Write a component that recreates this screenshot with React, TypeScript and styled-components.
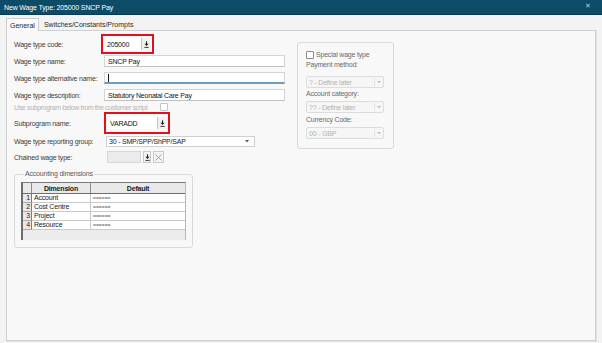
import styled, { createGlobalStyle } from 'styled-components';

const GlobalStyle = createGlobalStyle`
    html, body {
        margin: 0;
        padding: 0;
        background: #f3f3f3;
    }
    body {
        font-family: 'Liberation Sans', Arial, sans-serif;
    }
`;

const dims = [
    { no: 1, name: 'Account' },
    { no: 2, name: 'Cost Centre' },
    { no: 3, name: 'Project' },
    { no: 4, name: 'Resource' },
];

const DownloadIcon = () => (
    <svg width="5" height="7" viewBox="0 0 5 7">
        <path d="M2.5 0.3V3.2" stroke="#222" strokeWidth="1.1" />
        <path d="M0.4 2.8H4.6L2.5 5Z" fill="#222" />
        <path d="M0.4 6.4H4.6" stroke="#222" strokeWidth="0.9" />
    </svg>
);

const CrossIcon = () => (
    <svg width="7" height="7" viewBox="0 0 7 7">
        <path d="M0.5 0.5L6.5 6.5M6.5 0.5L0.5 6.5" stroke="#8a8a8a" strokeWidth="0.8" />
    </svg>
);

const Caret = ({ color }: { color: string }) => (
    <svg width="4" height="3" viewBox="0 0 4 3">
        <path d="M0 0H4L2 2.5Z" fill={color} />
    </svg>
);

export default function App() {
    return (
        <>
            <GlobalStyle />
            <Window>
                <TitleBar>
                    <span>New Wage Type: 205000 SNCP Pay</span>
                    <CloseGlyph>✕</CloseGlyph>
                </TitleBar>

                <TabStrip>
                    <Tab $active>General</Tab>
                    <Tab>Switches/Constants/Prompts</Tab>
                </TabStrip>

                <Panel>
                    <LeftColumn>
                        <Row $h={20}>
                            <Label>Wage type code:</Label>
                            <RedFrame $width={53} $shift={-3}>
                                <InputWithButton>
                                    <InputText>205000</InputText>
                                    <IconButton><DownloadIcon /></IconButton>
                                </InputWithButton>
                            </RedFrame>
                        </Row>

                        <Row $h={14}>
                            <Label>Wage type name:</Label>
                            <TextInput>SNCP Pay</TextInput>
                        </Row>

                        <Row $h={14} $mt={3}>
                            <Label>Wage type alternative name:</Label>
                            <TextInput $focused>
                                <CaretLine />
                            </TextInput>
                        </Row>

                        <Row $h={14} $mt={3}>
                            <Label>Wage type description:</Label>
                            <TextInput>Statutory Neonatal Care Pay</TextInput>
                        </Row>

                        <Row $h={10}>
                            <Label $disabled $wide>Use subprogram below from the customer script</Label>
                            <CheckBox $disabled />
                        </Row>

                        <Row $h={22}>
                            <Label>Subprogram name:</Label>
                            <RedFrame $width={66} $shift={0}>
                                <InputWithButton>
                                    <InputText>VARADD</InputText>
                                    <IconButton><DownloadIcon /></IconButton>
                                </InputWithButton>
                            </RedFrame>
                        </Row>

                        <Row $h={14}>
                            <Label>Wage type reporting group:</Label>
                            <Select $width={149}>
                                <span>30 - SMP/SPP/ShPP/SAP</span>
                                <Caret color="#555" />
                            </Select>
                        </Row>

                        <Row $h={18}>
                            <Label>Chained wage type:</Label>
                            <ChainedInput />
                            <SmallButton><DownloadIcon /></SmallButton>
                            <SmallButton $square><CrossIcon /></SmallButton>
                        </Row>

                        <GroupBox>
                            <Legend>Accounting dimensions</Legend>
                            <GridFrame>
                                <Grid>
                                    <thead>
                                        <tr>
                                            <HeadCell $w={8} />
                                            <HeadCell $w={58}>Dimension</HeadCell>
                                            <HeadCell>Default</HeadCell>
                                        </tr>
                                    </thead>
                                    <tbody>
                                        {dims.map((d) => (
                                            <tr key={d.no}>
                                                <NumCell>{d.no}</NumCell>
                                                <Cell>{d.name}</Cell>
                                                <Cell $muted>======</Cell>
                                            </tr>
                                        ))}
                                    </tbody>
                                </Grid>
                                <GridFiller />
                            </GridFrame>
                        </GroupBox>
                    </LeftColumn>

                    <SideBox>
                        <CheckRow>
                            <CheckBox />
                            <SideLabel>Special wage type</SideLabel>
                        </CheckRow>
                        <SideLabel $mt={1}>Payment method:</SideLabel>
                        <DisabledSelect $mt={6}>
                            <span>? - Define later</span>
                            <CaretBox><Caret color="#c2c2c2" /></CaretBox>
                        </DisabledSelect>
                        <SideLabel $mt={1}>Account category:</SideLabel>
                        <DisabledSelect $mt={2}>
                            <span>?? - Define later</span>
                            <CaretBox><Caret color="#c2c2c2" /></CaretBox>
                        </DisabledSelect>
                        <SideLabel $mt={2}>Currency Code:</SideLabel>
                        <DisabledSelect $mt={2}>
                            <span>00 - GBP</span>
                            <CaretBox><Caret color="#c2c2c2" /></CaretBox>
                        </DisabledSelect>
                    </SideBox>
                </Panel>
            </Window>
        </>
    );
}

const Window = styled.div`
    width: 602px;
    height: 343px;
    background: #f3f3f3;
    display: flex;
    flex-direction: column;
    overflow: hidden;
    font-size: 7px;
    color: #3c3c3c;
`;

const TitleBar = styled.div`
    height: 14px;
    flex-shrink: 0;
    background: #0e4b66;
    border-bottom: 1px solid #083b52;
    display: flex;
    align-items: center;
    justify-content: space-between;
    padding: 0 11px 0 4px;
    color: #ffffff;
    font-size: 7px;
    letter-spacing: -0.15px;
`;

const CloseGlyph = styled.span`
    color: #b9c7cf;
    font-size: 7px;
    line-height: 1;
    margin-top: -4px;
`;

const TabStrip = styled.div`
    height: 15px;
    flex-shrink: 0;
    display: flex;
    align-items: flex-end;
    padding-left: 6px;
`;

const Tab = styled.div<{ $active?: boolean }>`
    height: ${(p) => (p.$active ? '12px' : '11px')};
    padding: 0 ${(p) => (p.$active ? '3px' : '4px')};
    display: flex;
    align-items: center;
    font-size: 7px;
    color: #2a2a2a;
    background: ${(p) => (p.$active ? '#fafafa' : 'transparent')};
    border: ${(p) => (p.$active ? '1px solid #cdcdcd' : '1px solid transparent')};
    border-bottom: none;
    margin-bottom: ${(p) => (p.$active ? '-1px' : '0')};
    position: relative;
    z-index: 1;
`;

const Panel = styled.div`
    flex: 1;
    margin: 0 6px 2px 6px;
    background: #f8f8f8;
    border: 1px solid #cfcfcf;
    box-shadow: 1px 1px 0 #e2e2e2;
    display: flex;
    align-items: flex-start;
    padding: 3px 0 0 7px;
`;

const LeftColumn = styled.div`
    width: 271px;
    display: flex;
    flex-direction: column;
`;

const Row = styled.div<{ $h: number; $mt?: number }>`
    height: ${(p) => p.$h}px;
    margin-top: ${(p) => p.$mt ?? 0}px;
    display: flex;
    align-items: center;
`;

const Label = styled.span<{ $disabled?: boolean; $wide?: boolean }>`
    width: ${(p) => (p.$wide ? '146px' : '90px')};
    flex-shrink: 0;
    white-space: nowrap;
    font-size: 7px;
    letter-spacing: ${(p) => (p.$wide ? '-0.35px' : '-0.2px')};
    color: ${(p) => (p.$disabled ? '#b4b4b4' : '#3c3c3c')};
`;

const RedFrame = styled.div<{ $width: number; $shift: number }>`
    width: ${(p) => p.$width}px;
    height: 100%;
    margin-left: ${(p) => p.$shift}px;
    box-sizing: border-box;
    border: 2px solid #d9141f;
    padding: 1px 2px;
    display: flex;
    align-items: center;
`;

const InputWithButton = styled.div`
    flex: 1;
    height: 12px;
    box-sizing: border-box;
    background: #ffffff;
    display: flex;
    align-items: stretch;
`;

const InputText = styled.span`
    flex: 1;
    display: flex;
    align-items: center;
    padding-left: 2px;
    color: #111;
    font-size: 7px;
    letter-spacing: -0.2px;
`;

const IconButton = styled.span`
    width: 8px;
    display: flex;
    align-items: center;
    justify-content: center;
    background: #f1f1f1;
    border-left: 1px solid #c6c6c6;
`;

const TextInput = styled.div<{ $focused?: boolean }>`
    width: 181px;
    height: 12px;
    box-sizing: border-box;
    background: #ffffff;
    border: 1px solid #d4d4d4;
    border-bottom: ${(p) => (p.$focused ? '2px solid #6f9ec0' : '1px solid #c2c2c2')};
    display: flex;
    align-items: center;
    padding-left: 3px;
    color: #111;
    font-size: 7px;
    letter-spacing: -0.2px;
`;

const CaretLine = styled.span`
    width: 1px;
    height: 8px;
    background: #111;
`;

const CheckBox = styled.span<{ $disabled?: boolean }>`
    width: 6px;
    height: 6px;
    flex-shrink: 0;
    background: #ffffff;
    border: 1px solid ${(p) => (p.$disabled ? '#c6c6c6' : '#8a8a8a')};
    border-radius: 1px;
`;

const Select = styled.div<{ $width: number }>`
    width: ${(p) => p.$width}px;
    height: 11px;
    margin-left: 2px;
    box-sizing: border-box;
    background: #ffffff;
    border: 1px solid #d0d0d0;
    display: flex;
    align-items: center;
    justify-content: space-between;
    padding: 0 5px 0 2px;
    color: #222;
    font-size: 7px;
    letter-spacing: -0.2px;
`;

const ChainedInput = styled.div`
    width: 34px;
    height: 12px;
    margin-left: 3px;
    box-sizing: border-box;
    background: #ebebeb;
    border: 1px solid #d6d6d6;
`;

const SmallButton = styled.span<{ $square?: boolean }>`
    width: ${(p) => (p.$square ? '11px' : '8px')};
    height: 12px;
    margin-left: 2px;
    box-sizing: border-box;
    background: #f4f4f4;
    border: 1px solid #c9c9c9;
    display: flex;
    align-items: center;
    justify-content: center;
`;

const GroupBox = styled.fieldset`
    width: 179px;
    box-sizing: border-box;
    margin: 4px 0 0 0;
    padding: 4px 6px 7px 6px;
    border: 1px solid #dadada;
    border-radius: 3px;
`;

const Legend = styled.legend`
    font-size: 7px;
    letter-spacing: -0.2px;
    color: #5a5a5a;
    padding: 0 1px;
    margin-left: 3px;
    line-height: 8px;
`;

const GridFrame = styled.div`
    width: 165px;
    border-top: 1px solid #7a7a7a;
    border-left: 2px solid #6e6e6e;
    border-right: 1px solid #b8b8b8;
    box-sizing: border-box;
    background: #ececec;
`;

const Grid = styled.table`
    width: 100%;
    border-collapse: collapse;
    table-layout: fixed;
    font-size: 7px;
    letter-spacing: -0.2px;
`;

const HeadCell = styled.th<{ $w?: number }>`
    width: ${(p) => (p.$w ? `${p.$w}px` : 'auto')};
    height: 10px;
    padding: 0;
    background: #e9e9e9;
    border-right: 1px solid #8e8e8e;
    border-bottom: 1px solid #6f6f6f;
    font-weight: 700;
    color: #1a1a1a;
    text-align: center;
    &:last-child {
        border-right: none;
    }
`;

const NumCell = styled.td`
    height: 8px;
    padding: 0 1px 0 0;
    background: #e9e9e9;
    border-right: 1px solid #7c7c7c;
    border-bottom: 1px solid #a9a9a9;
    text-align: right;
    color: #222;
    line-height: 8px;
`;

const Cell = styled.td<{ $muted?: boolean }>`
    height: 8px;
    padding: 0 0 0 2px;
    background: #ffffff;
    border-right: 1px solid #c9c9c9;
    border-bottom: 1px solid #c9c9c9;
    color: ${(p) => (p.$muted ? '#555' : '#222')};
    font-size: ${(p) => (p.$muted ? '5px' : '7px')};
    letter-spacing: ${(p) => (p.$muted ? '0' : '-0.2px')};
    line-height: 8px;
    white-space: nowrap;
    &:last-child {
        border-right: none;
    }
`;

const GridFiller = styled.div`
    height: 10px;
`;

const SideBox = styled.div`
    width: 97px;
    height: 107px;
    margin: 8px 0 0 12px;
    box-sizing: border-box;
    border: 1px solid #d9d9d9;
    border-radius: 3px;
    padding: 8px 0 0 8px;
    display: flex;
    flex-direction: column;
    align-items: flex-start;
`;

const CheckRow = styled.div`
    height: 8px;
    display: flex;
    align-items: center;
    gap: 2px;
`;

const SideLabel = styled.span<{ $mt?: number }>`
    margin-top: ${(p) => p.$mt ?? 0}px;
    height: 10px;
    line-height: 10px;
    font-size: 7px;
    letter-spacing: -0.2px;
    color: #6a6a6a;
    white-space: nowrap;
`;

const DisabledSelect = styled.div<{ $mt: number }>`
    width: 78px;
    height: 12px;
    margin-top: ${(p) => p.$mt}px;
    box-sizing: border-box;
    border: 1px solid #dcdcdc;
    border-radius: 2px;
    background: #f6f6f6;
    display: flex;
    align-items: center;
    justify-content: space-between;
    padding-left: 2px;
    color: #b2b2b2;
    font-size: 7px;
    letter-spacing: -0.2px;
`;

const CaretBox = styled.span`
    width: 7px;
    height: 8px;
    margin-right: 1px;
    border-left: 1px solid #e2e2e2;
    display: flex;
    align-items: center;
    justify-content: center;
`;
